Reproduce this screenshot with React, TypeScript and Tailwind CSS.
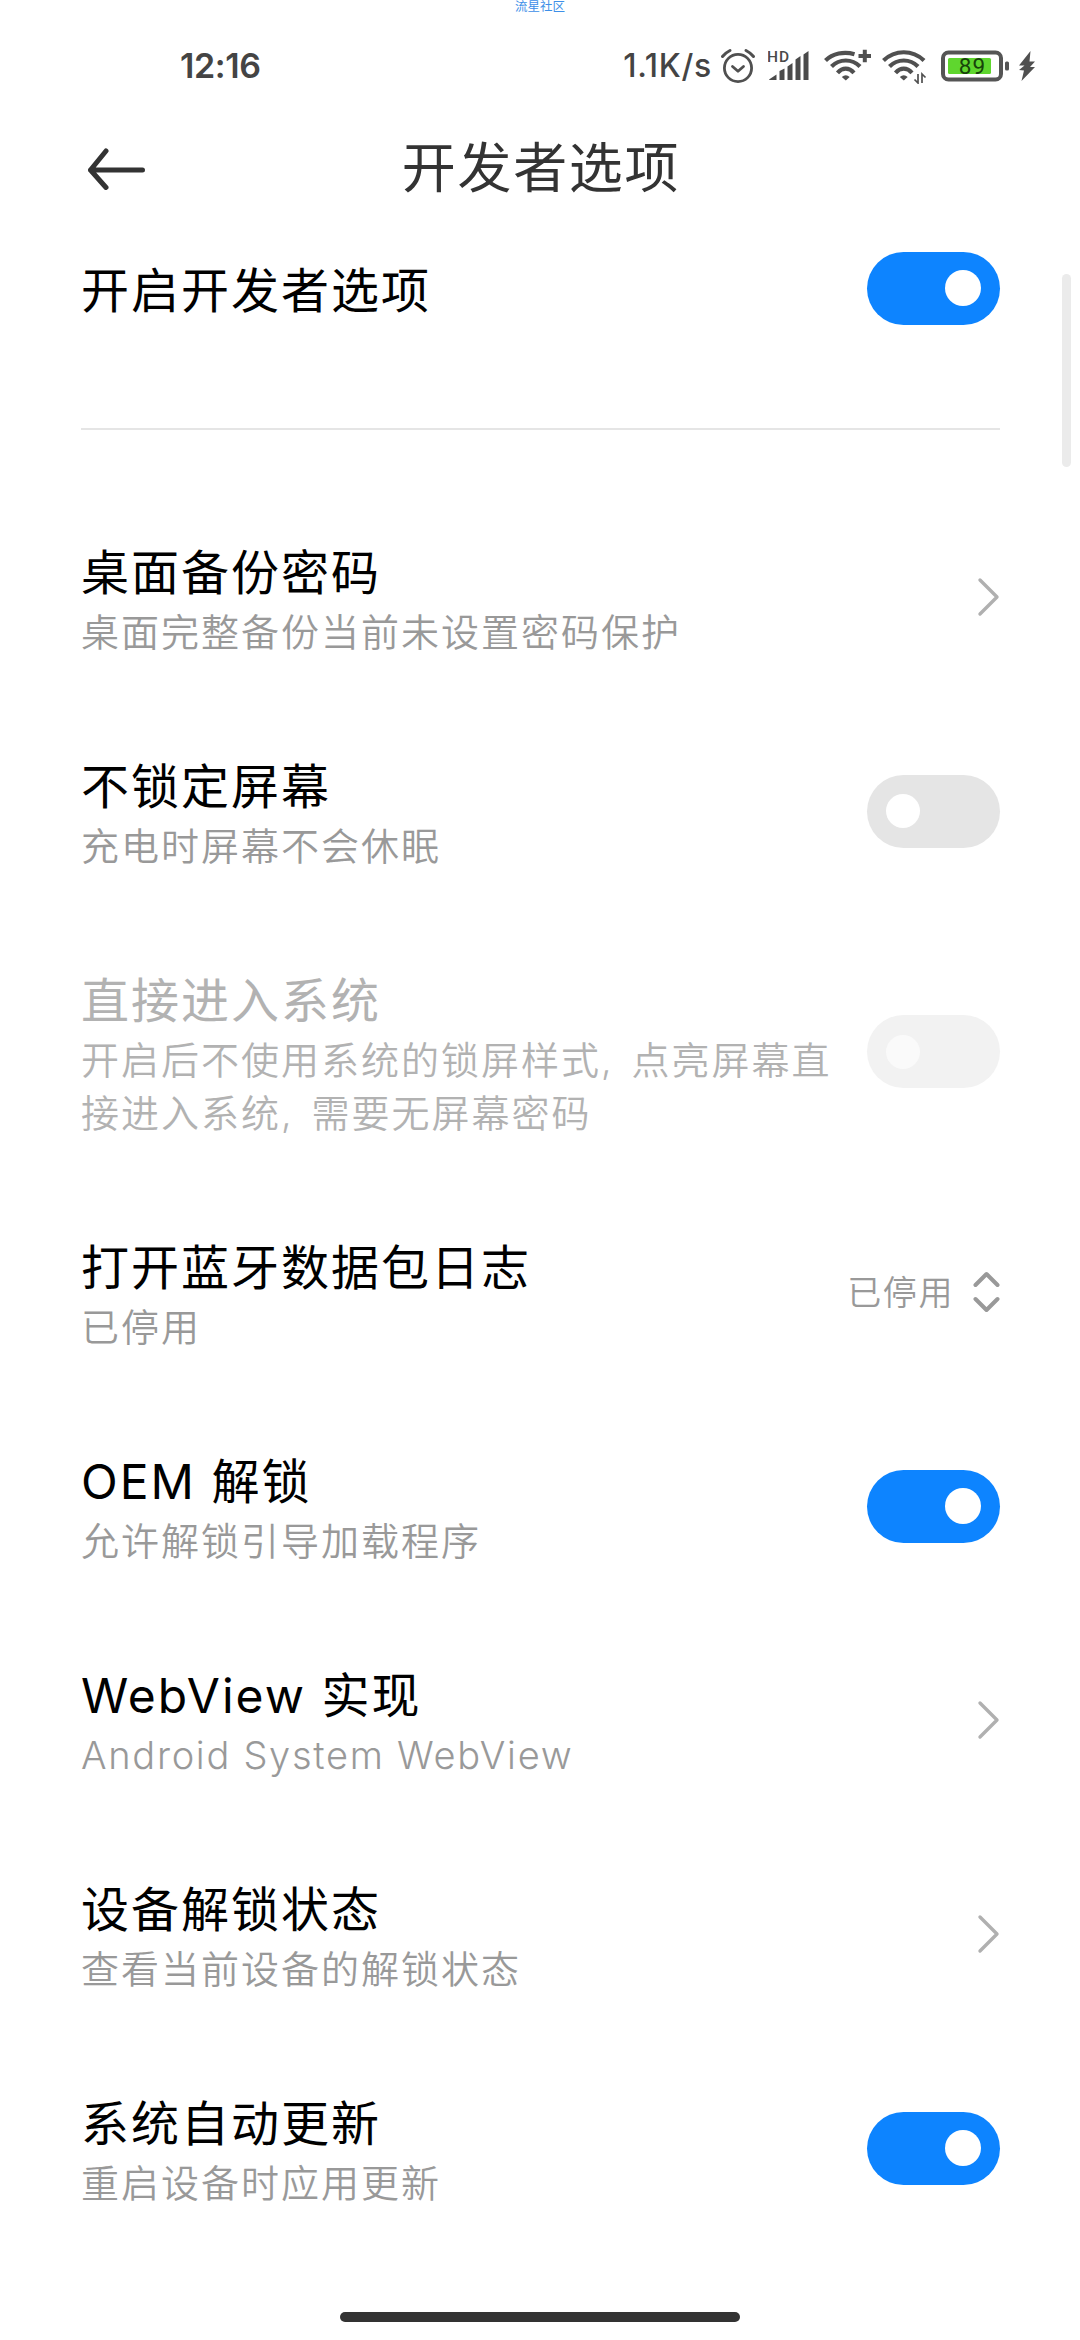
import clsx from "clsx";
import type { ReactNode } from "react";

type SettingItem = {
  title: string;
  summary: string;
  control: "arrow" | "on" | "off" | "select";
  value?: string;
  disabled?: boolean;
};

const settings: SettingItem[] = [
  { title: "桌面备份密码", summary: "桌面完整备份当前未设置密码保护", control: "arrow" },
  { title: "不锁定屏幕", summary: "充电时屏幕不会休眠", control: "off" },
  {
    title: "直接进入系统",
    summary: "开启后不使用系统的锁屏样式, 点亮屏幕直接进入系统, 需要无屏幕密码",
    control: "off",
    disabled: true,
  },
  { title: "打开蓝牙数据包日志", summary: "已停用", control: "select", value: "已停用" },
  { title: "OEM 解锁", summary: "允许解锁引导加载程序", control: "on" },
  { title: "WebView 实现", summary: "Android System WebView", control: "arrow" },
  { title: "设备解锁状态", summary: "查看当前设备的解锁状态", control: "arrow" },
  { title: "系统自动更新", summary: "重启设备时应用更新", control: "on" },
];

const isLatin = (text: string) => /^[\x20-\x7e]+$/.test(text);

const AlarmIcon = () => (
  <svg width="36" height="36" viewBox="0 0 36 36" fill="none" stroke="#505050" strokeLinecap="round" strokeLinejoin="round">
    <circle cx="18" cy="20" r="13.6" strokeWidth="2.8" />
    <path d="M12.5 18.5l5.5 4.8 5.5-4.8" strokeWidth="2.8" />
    <path d="M2.5 8.5C4.5 6 7 4 10 2.5M33.5 8.5C31.5 6 29 4 26 2.5" strokeWidth="3" />
  </svg>
);

const SignalIcon = () => (
  <svg width="42" height="34" viewBox="0 0 42 34" fill="#4a4a4a">
    <text x="-1" y="12.5" fontSize="15.5" fontWeight="500" letterSpacing="1" fontFamily="Roboto, sans-serif">
      HD
    </text>
    <path d="M1 30.5 8.500 25.500V31H1.500Z" />
    <path d="M11.5 22 16.5 19.5V31H11.5Z" />
    <path d="M19.5 17.5 24.5 14V31H19.5Z" />
    <path d="M27.5 10.5 32.5 7V31H27.5Z" />
    <path d="M35.5 5.5 40.5 2V31H35.5Z" />
  </svg>
);

const WifiIcon = ({ badge }: { badge: "plus" | "data" }) => (
  <svg width="48" height="36" viewBox="0 0 48 36" fill="none" stroke="#505050" strokeWidth="4.2">
    <path d={badge === "plus" ? "M1.5 12.5C8.5 5.5 20 3 30.5 6.2" : "M1.5 12.5C13 1.5 30.5 1.5 42 12.5"} />
    <path d="M7.5 18.5C15.5 10.5 28 10.5 36 18.5" />
    <path d="M13.5 24.8C18.5 19.3 25 19.3 30 24.8" />
    <path d="M17.8 29Q21.8 25.5 25.7 29L21.8 32.5Z" fill="#505050" stroke="none" />
    {badge === "plus" ? (
      <path d="M34.5 8H47M40.8 1.7V14.2" strokeWidth="4" />
    ) : (
      <path d="M36 26V35L32.5 31.5M40 35V26L43.5 29.5" strokeWidth="1.7" />
    )}
  </svg>
);

const BatteryIcon = () => (
  <svg width="70" height="32" viewBox="0 0 70 32">
    <rect x="2" y="2.5" width="58" height="27" rx="5.5" fill="none" stroke="#555" strokeWidth="4" />
    <rect x="7" y="8" width="43" height="16" rx="1.5" fill="#5fd62e" />
    <rect x="64" y="11.5" width="4" height="9" rx="1.5" fill="#555" />
    <text x="31.5" y="24" textAnchor="middle" fontSize="22.5" fontWeight="400" letterSpacing="1" fill="#17430a" fontFamily="Roboto, sans-serif">
      89
    </text>
  </svg>
);

const BoltIcon = () => (
  <svg width="18" height="32" viewBox="0 0 18 32" fill="#505050">
    <path d="M12.5 1 1 15.5H6.5L1 20 6 20.5 3.5 31 17 17H12L17 11.5H11.5Z" />
  </svg>
);

const StatusBar = () => (
  <div className="flex h-[110px] items-center justify-between pt-[22px] pr-[44px] pl-[180px] font-[Inter,sans-serif] font-semibold text-[#444]">
    <span className="text-[34px] leading-none tracking-[-0.4px]">12:16</span>
    <div className="flex items-center">
      <span className="mr-[8px] text-[32px] leading-none font-medium tracking-[0.7px]">1.1K/s</span>
      <AlarmIcon />
      <div className="ml-[12px] flex">
        <SignalIcon />
      </div>
      <div className="ml-[14px] flex">
        <WifiIcon badge="plus" />
      </div>
      <div className="ml-[10px] flex">
        <WifiIcon badge="data" />
      </div>
      <div className="ml-[11px] flex">
        <BatteryIcon />
      </div>
      <div className="ml-[7px] flex">
        <BoltIcon />
      </div>
    </div>
  </div>
);

const PageHeader = () => (
  <header className="grid h-[114px] grid-cols-[1fr_auto_1fr] items-center px-[85px] pt-[2px]">
    <button type="button" aria-label="返回" className="flex">
      <svg width="62" height="44" viewBox="0 0 62 44" fill="none" stroke="#333" strokeWidth="5" strokeLinecap="round" strokeLinejoin="round">
        <path d="M21 5 5.5 24 21 41.5M5.5 24H57.5" />
      </svg>
    </button>
    <h1 className="pt-[2px] pl-[2px] text-[54px] leading-[70px] tracking-[1.7px] text-[#333]">开发者选项</h1>
  </header>
);

const Switch = ({ checked, disabled }: { checked: boolean; disabled?: boolean }) => (
  <button
    type="button"
    role="switch"
    aria-checked={checked}
    disabled={disabled}
    className={clsx(
      "flex h-[73px] w-[133px] shrink-0 items-center rounded-full px-[19px]",
      checked && "justify-end bg-[#0d84ff]",
      !checked && (disabled ? "bg-[#f2f2f2]" : "bg-[#e5e5e5]"),
    )}
  >
    <span
      className={clsx(
        "rounded-full",
        checked ? "size-[36px]" : "size-[34px]",
        disabled ? "bg-[#fafafa]" : "bg-white",
      )}
    />
  </button>
);

const ArrowIcon = () => (
  <svg width="24" height="40" viewBox="0 0 24 40" fill="none" stroke="#b0b0b0" strokeWidth="3.4" strokeLinecap="round" strokeLinejoin="round">
    <path d="M4 3 21 20 4 37" />
  </svg>
);

const SelectValue = ({ value }: { value?: string }) => (
  <div className="flex shrink-0 items-center gap-[18px]">
    <span className="pt-[2px] text-[34px] leading-none font-[350] tracking-[1.6px] text-[#999]">{value}</span>
    <svg width="28" height="42" viewBox="0 0 28 42" fill="none" stroke="#999" strokeWidth="4" strokeLinecap="round" strokeLinejoin="round">
      <path d="M3.5 14 14.5 3 25.5 14M3.5 28 14.5 39 25.5 28" />
    </svg>
  </div>
);

const SettingRow = ({ item }: { item: SettingItem }) => {
  let control: ReactNode = <ArrowIcon />;
  if (item.control === "select") {
    control = <SelectValue value={item.value} />;
  } else if (item.control !== "arrow") {
    control = <Switch checked={item.control === "on"} disabled={item.disabled} />;
  }

  return (
    <li className="flex items-center justify-between py-[45.5px]">
      <div className={clsx("w-[765px] pt-[4px]", item.disabled ? "text-[#b2b2b2]" : "text-black")}>
        <p className="text-[48px] leading-[66px] tracking-[2px]">{item.title}</p>
        <p
          className={clsx(
            "text-[38px] leading-[53px] font-[350]",
            isLatin(item.summary) ? "tracking-[1.7px]" : "tracking-[2px] [word-spacing:5px]",
            !item.disabled && "text-[#999]",
          )}
        >
          {item.summary}
        </p>
      </div>
      {control}
    </li>
  );
};

export default function App() {
  return (
    <div className="relative flex h-[2340px] w-[1080px] flex-col overflow-hidden bg-white font-[Inter,'Noto_Sans_CJK_SC',sans-serif]">
      <span className="absolute top-0 left-0 w-full text-center text-[12.5px] leading-[13px] text-[#3d8fe8]">流星社区</span>
      <StatusBar />
      <PageHeader />
      <main className="pr-[80px] pl-[81px]">
        <div className="flex h-[128px] items-center justify-between">
          <p className="pt-[5px] text-[48px] leading-[68px] tracking-[2px] text-black">开启开发者选项</p>
          <Switch checked />
        </div>
        <hr className="mt-[76px] mb-[60px] border-t-2 border-[#e5e5e5]" />
        <ul>
          {settings.map((item) => (
            <SettingRow key={item.title} item={item} />
          ))}
        </ul>
      </main>
      <div className="absolute top-[274px] right-[9px] h-[193px] w-[9px] rounded-full bg-[#ebebeb]" />
      <div className="mx-auto mt-auto mb-[18px] h-[10px] w-[400px] rounded-full bg-[#333]" />
    </div>
  );
}
